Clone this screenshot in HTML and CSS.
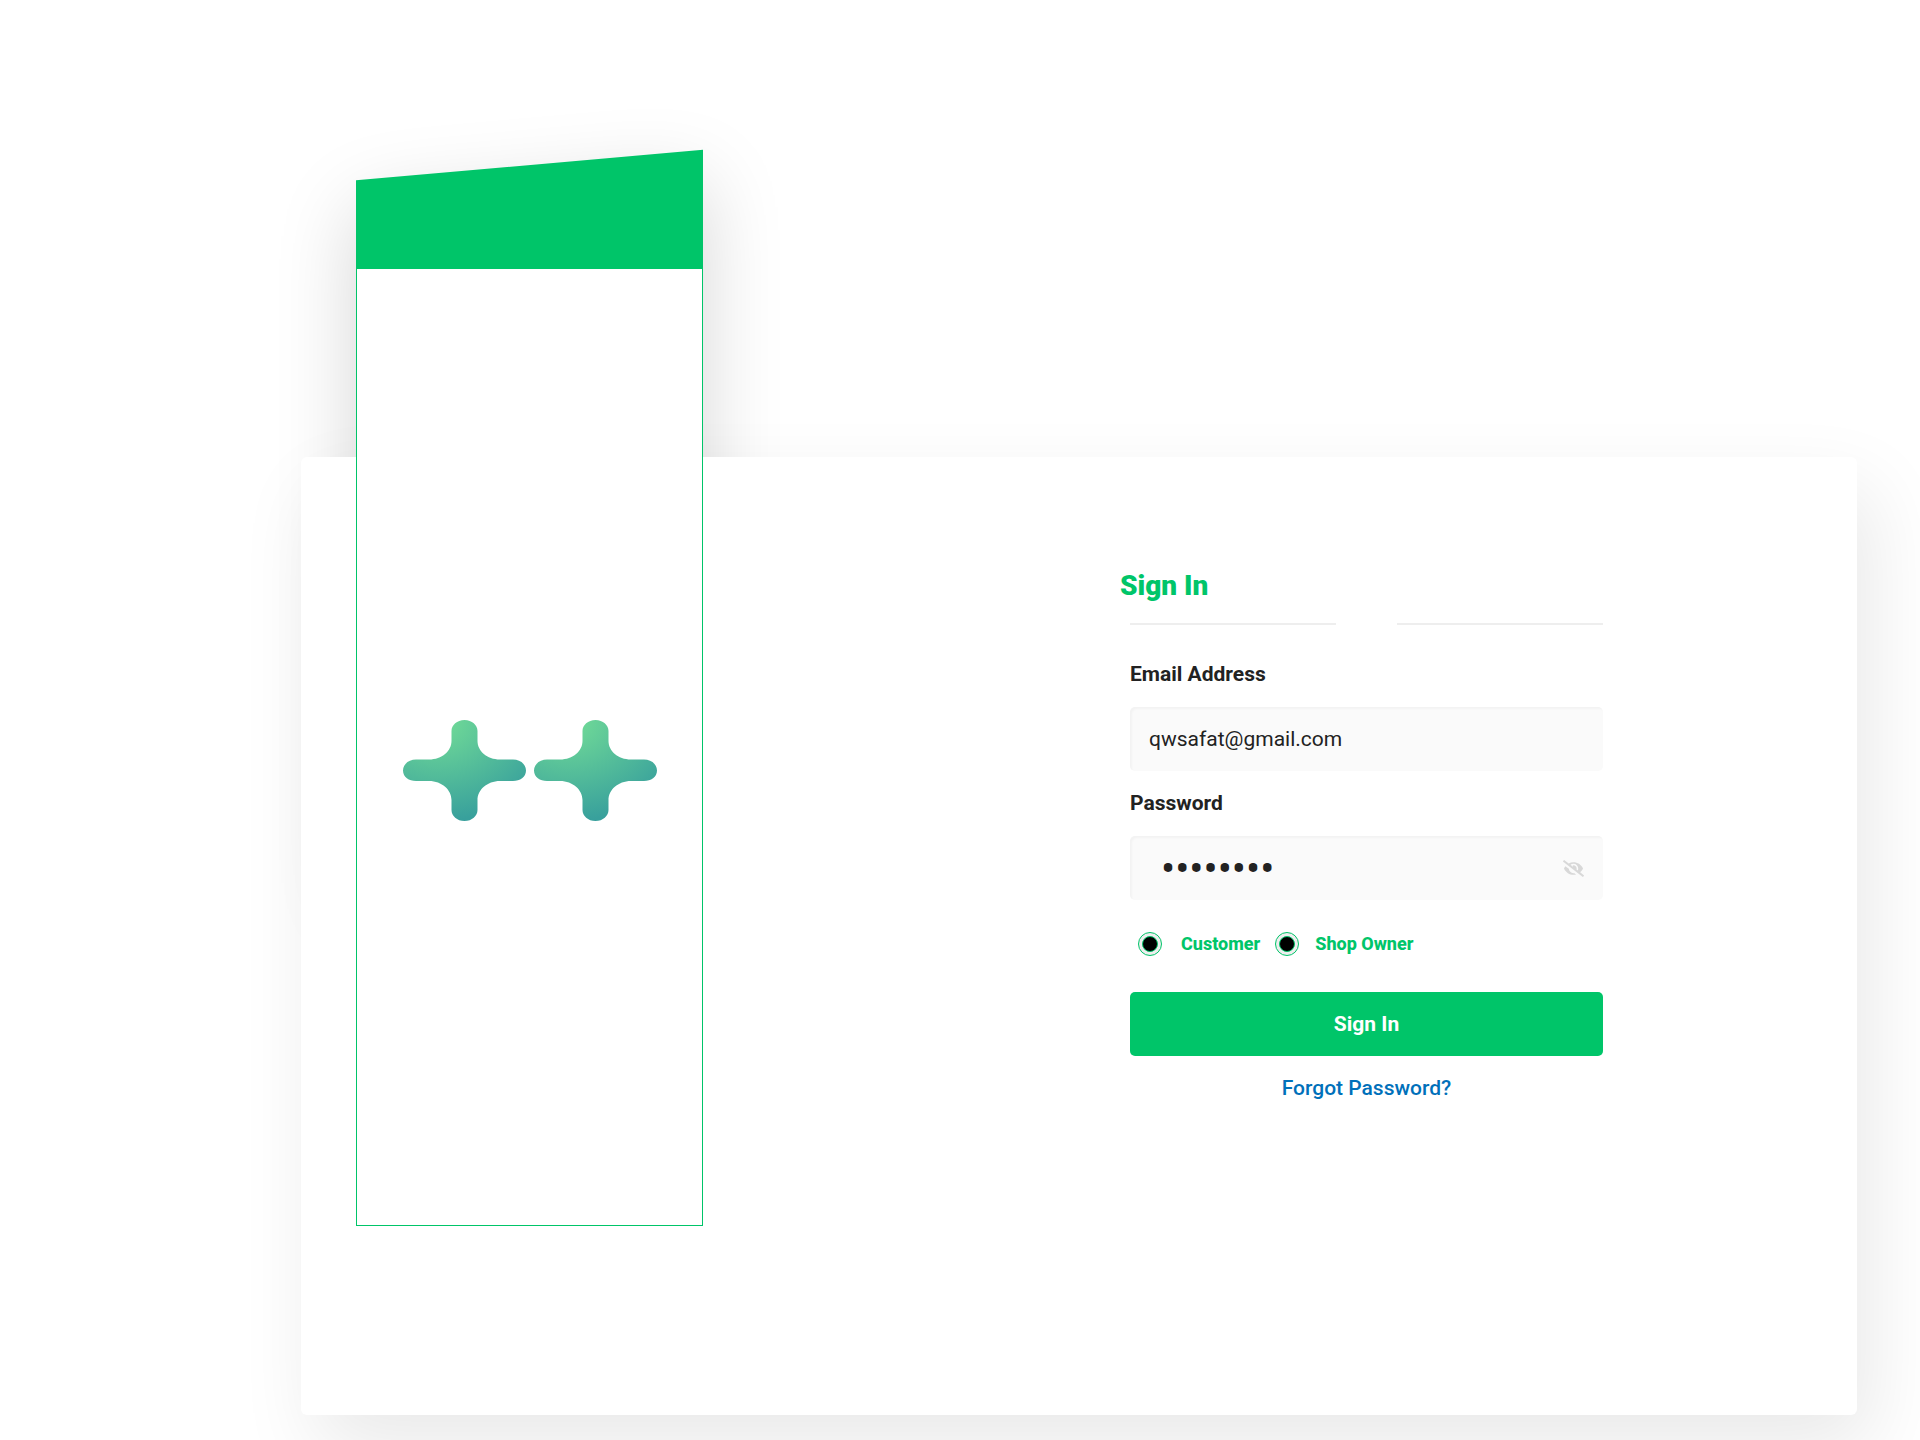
FILE: index.html
```html
<!DOCTYPE html>
<html lang="en">
<head>
<meta charset="utf-8">
<title>Sign In</title>
<link rel="stylesheet" href="styles.css">
</head>
<body>
<main class="page">
  <div class="card">
    <aside class="panel">
      <svg class="logo" viewBox="0 0 123 101" aria-hidden="true">
        <defs>
          <radialGradient id="leaf" cx="0.28" cy="0" r="1">
            <stop offset="0" stop-color="#74de97"/>
            <stop offset="1" stop-color="#38a09c"/>
          </radialGradient>
        </defs>
        <path id="plus" fill="url(#leaf)" d="M48.500 11C48.500 5 54 0 61.500 0S74.500 5 74.500 11V21C74.500 31 84 39.500 97 39.500H110C117 39.500 123 44 123 50.500S117 61 110 61H97C84 61 74.500 70 74.500 80V90C74.500 96 69 101 61.500 101S48.500 96 48.500 90V80C48.500 70 39 61 26 61H13C6 61 0 57 0 50.500S6 39.500 13 39.500H26C39 39.500 48.500 31 48.500 21Z"/>
      </svg>
      <svg class="logo" viewBox="0 0 123 101" aria-hidden="true"><use href="#plus"/></svg>
    </aside>
    <section class="content">
      <h1 class="title">Sign In</h1>
      <form class="form">
        <div class="divider"><span class="rule"></span><span class="rule"></span></div>
        <div class="field">
          <label class="label" for="email">Email Address</label>
          <input class="input" id="email" type="email" value="qwsafat@gmail.com">
        </div>
        <div class="field">
          <label class="label" for="password">Password</label>
          <div class="password">
            <input class="input input-password" id="password" type="password" value="password">
            <button class="reveal" type="button" aria-label="Show password">
              <svg class="eye" viewBox="0 0 640 512" aria-hidden="true"><path fill="currentColor" d="M320 400c-75.850 0-137.250-58.710-142.900-133.110L72.200 185.820c-13.790 17.300-26.480 35.590-36.720 55.590a32.350 32.350 0 0 0 0 29.190C89.710 376.410 197.070 448 320 448c26.910 0 52.870-4 77.890-10.460L346 397.390a144.130 144.130 0 0 1-26 2.610zm313.820 58.100l-110.550-85.440a331.250 331.250 0 0 0 81.250-102.070 32.350 32.350 0 0 0 0-29.190C550.290 135.590 442.930 64 320 64a308.150 308.150 0 0 0-147.320 37.700L45.460 3.370A16 16 0 0 0 23 6.180L3.370 31.450A16 16 0 0 0 6.180 53.900l588.360 454.730a16 16 0 0 0 22.460-2.810l19.640-25.270a16 16 0 0 0-2.820-22.450zm-183.720-142l-39.300-30.380A94.750 94.750 0 0 0 416 256a94.760 94.760 0 0 0-121.310-92.210A47.650 47.650 0 0 1 304 192a46.640 46.640 0 0 1-1.540 10l-73.610-56.890A142.310 142.310 0 0 1 320 112a143.920 143.920 0 0 1 144 144c0 21.630-5.290 41.790-13.900 60.110z"/></svg>
            </button>
          </div>
        </div>
        <div class="roles">
          <label class="role"><input class="radio" type="radio" name="role" checked>Customer</label>
          <label class="role role-owner"><input class="radio" type="radio" name="role">Shop Owner</label>
        </div>
        <button class="submit" type="submit">Sign In</button>
        <a class="forgot" href="#">Forgot Password?</a>
      </form>
    </section>
  </div>
</main>
</body>
</html>
```
FILE: styles.css
```css
* {
  box-sizing: border-box;
}

body {
  margin: 0;
  background: #fff;
  color: #222;
  font-family: Roboto, sans-serif;
  font-size: 21px;
  line-height: 26px;
}

.page {
  isolation: isolate;
  overflow: hidden;
  padding: 457px 63px 25px 301px;
}

.card {
  display: flex;
  justify-content: space-between;
  align-items: flex-start;
  padding: 0 254px 189px 55px;
  border-radius: 6px;
  background: #fff;
  box-shadow: 15px 32px 80px rgba(0, 0, 0, 0.09);
}

.panel {
  position: relative;
  display: flex;
  justify-content: center;
  gap: 8px;
  width: 347px;
  height: 958px;
  margin-top: -189px;
  padding-top: 451px;
  border: 1px solid #00c569;
  background: #fff;
}

/* Slanted roof that sits behind the card */
.panel::before {
  content: "";
  position: absolute;
  z-index: -1;
  top: -104px;
  left: -1px;
  right: -1px;
  height: 700px;
  background: #00c569;
  box-shadow: 0 30px 80px rgba(0, 0, 0, 0.17);
  transform: skewY(-5deg);
}

.logo {
  width: 123px;
  height: 101px;
}

.content {
  width: 483px;
  padding-top: 112px;
}

.title {
  margin: 0;
  color: #00c569;
  font-size: 28px;
  font-weight: 900;
  line-height: 34px;
}

.form {
  display: flex;
  flex-direction: column;
  margin: 20px 0 0 10px;
}

.divider {
  display: flex;
  gap: 61px;
  margin-bottom: 36px;
}

.rule {
  flex: 1;
  height: 2px;
  background: #eee;
}

.field {
  display: flex;
  flex-direction: column;
  gap: 20px;
  margin-bottom: 19px;
}

.label {
  font-weight: 700;
}

.input {
  width: 100%;
  height: 64px;
  padding: 0 19px;
  border: 0;
  border-radius: 5px;
  outline: 0;
  background: #fafafa;
  box-shadow: inset 2px 2px 2px rgba(0, 0, 0, 0.03);
  color: #222;
  font: inherit;
}

.input-password {
  padding: 0 56px 0 31px;
  font-size: 42px;
}

.password {
  position: relative;
}

.reveal {
  position: absolute;
  top: 0;
  right: 0;
  display: flex;
  align-items: center;
  height: 64px;
  padding: 0 19px;
  border: 0;
  background: none;
  color: #d8d8d8;
}

.eye {
  width: 21px;
  height: 17px;
}

.roles {
  display: flex;
  gap: 15px;
  margin: 13px 0 36px 8px;
  color: #00c569;
  font-size: 18px;
  font-weight: 800;
  line-height: 24px;
}

.role {
  display: flex;
  align-items: center;
  gap: 19px;
}

.role-owner {
  gap: 16px;
}

.radio {
  appearance: none;
  display: grid;
  place-items: center;
  width: 24px;
  height: 24px;
  margin: 0;
  border: 1px solid #00c569;
  border-radius: 50%;
  background: #eee;
}

.radio::before {
  content: "";
  width: 14px;
  height: 14px;
  border: 1px solid #00c569;
  border-radius: 50%;
  background: #000;
}

.submit {
  height: 64px;
  margin-bottom: 19px;
  border: 0;
  border-radius: 5px;
  background: #00c569;
  color: #fff;
  font: inherit;
  font-weight: 700;
}

.forgot {
  align-self: center;
  color: #0070ba;
  font-weight: 500;
  text-decoration: none;
}
```
